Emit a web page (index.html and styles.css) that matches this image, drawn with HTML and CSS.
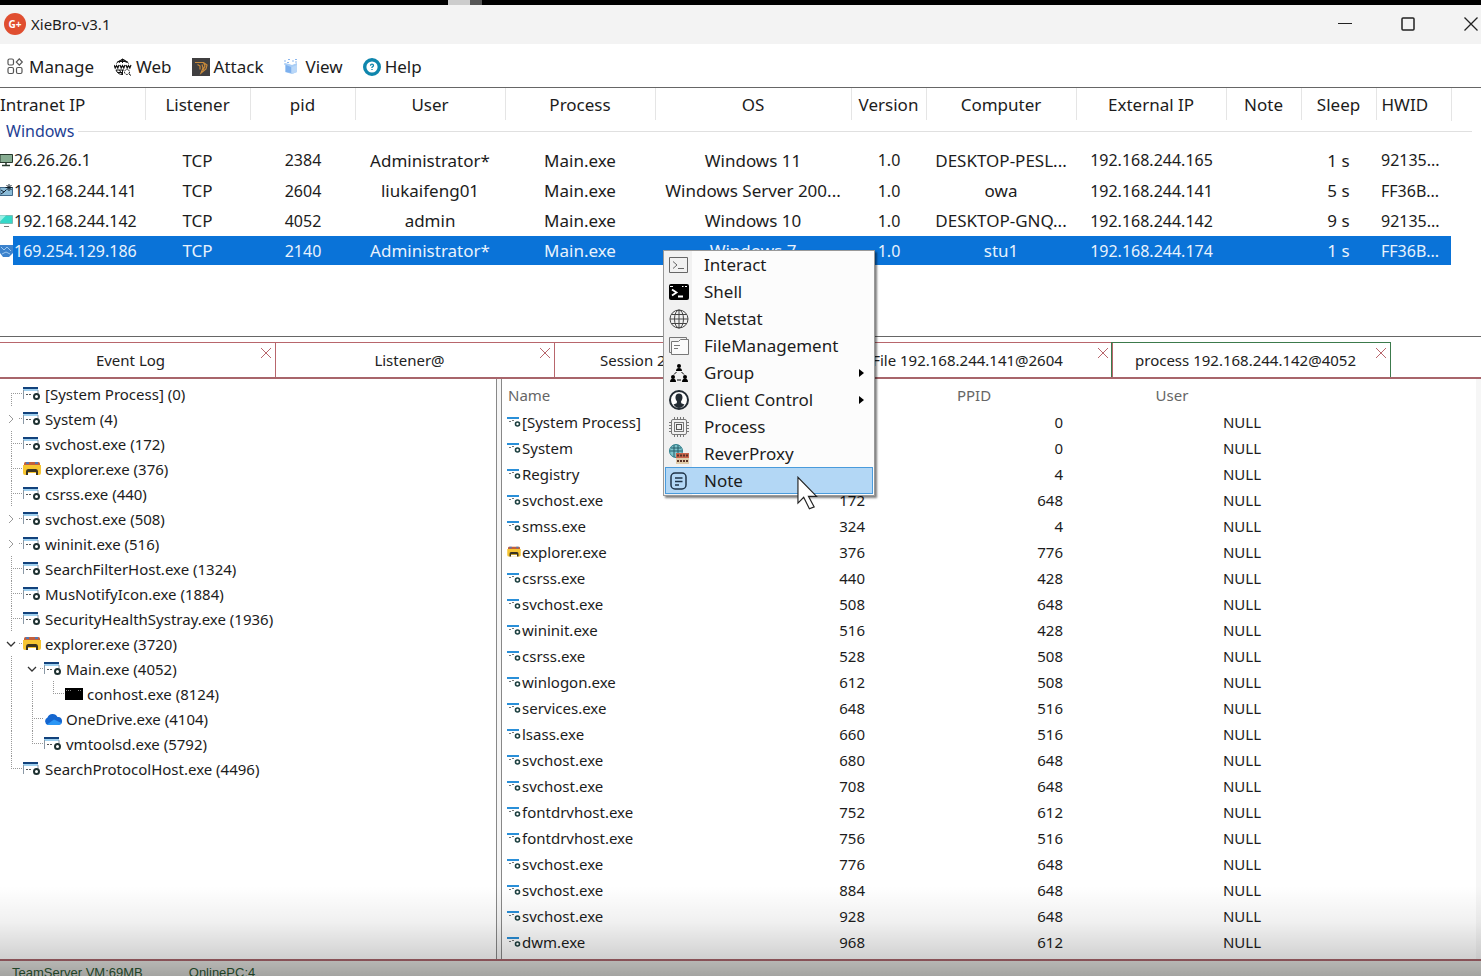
FILE: index.html
```
<!DOCTYPE html>
<html lang="en">

<head>
    <meta charset="UTF-8">
    <meta name="viewport" content="width=device-width, initial-scale=1.0">
    <title>XieBro-v3.1</title>
    <link rel="stylesheet" href="styles.css">
</head>
<body>
    <!-- shared icons -->
    <svg class="defs" aria-hidden="true">
        <symbol id="i-exe" viewBox="0 0 18 16">
            <path d="M0 2h16v12H0z" fill="#fff"/>
            <path d="M0 1h15v4H0z" fill="#9fd0ee"/>
            <path d="M0 1h15v2H0z" fill="#12427c"/>
            <path d="M.5 4v9M15 4v4" stroke="#8a98a5" fill="none"/>
            <path d="M3 8.500h2M6 8.500h2" stroke="#555" fill="none"/>
            <circle cx="13.500" cy="10.500" r="2.500" fill="#fff" stroke="#1d3030" stroke-width="2"/>
        </symbol>
        <symbol id="i-exe-small" viewBox="0 0 14 12">
            <path d="M0 1h12v2H0z" fill="#2a8fd8"/>
            <path d="M2 5.500h2M5 4.500h2" stroke="#777" fill="none"/>
            <circle cx="10.500" cy="8" r="2" fill="#fff" stroke="#1d4040" stroke-width="1.600"/>
        </symbol>
        <symbol id="i-folder" viewBox="0 0 18 16">
            <path d="M1 2.500q0-1.500 1.500-1.500h13q1.500 0 1.500 1.500V5H1z" fill="#c4603a"/>
            <path d="M3 1h3v2H3zM12 1h3v2h-3z" fill="#5577b0"/>
            <path d="M0 4h18v8q0 2-2 2H2q-2 0-2-2z" fill="#f6c531"/>
            <path d="M3 14V10.500Q3 8 5 8h8q2 0 2 2.500V14h-2v-3H5v3z" fill="#3a3320"/>
            <path d="M5 12h8v2H5z" fill="#fff"/>
        </symbol>
        <symbol id="i-console" viewBox="0 0 18 16">
            <path d="M0 2h18v12H0z" fill="#000"/>
            <path d="M1 4.500h5M13 4.500h4" stroke="#888" stroke-dasharray="1 1" fill="none"/>
        </symbol>
        <symbol id="i-cloud" viewBox="0 0 18 16">
            <path d="M4 14a4 4 0 0 1-.5-7.500A5.500 5.500 0 0 1 13.500 6 4 4 0 0 1 14.500 14z" fill="#1566cf"/>
            <path d="M3 13.500 10 8.500l7.500 3.500q-.5 2-3 2H4z" fill="#2a96f5"/>
        </symbol>
        <symbol id="i-pc" viewBox="0 0 13 14">
            <path d="M0 1.500h12.500v8H0z" fill="#87ad92" stroke="#26382c"/>
            <path d="M6 10v2M2 12.500h8" stroke="#26382c" stroke-width="1.500"/>
        </symbol>
        <symbol id="i-pc-server" viewBox="0 0 13 14">
            <path d="M0 3.500h12.500v8H0z" fill="#8cbcd8" stroke="#41698a"/>
            <path d="M1 6l3 2 2-2M1 10l3-2" stroke="#123" fill="none"/>
            <path d="M9 0v7M5.500 3.500h7M6.500 1l5 5M11.500 1l-5 5" stroke="#0c1c28"/>
        </symbol>
        <symbol id="i-pc-cyan" viewBox="0 0 13 14">
            <path d="M0 1.500h12.500v8H0z" fill="#35d8c8" stroke="#7abab4"/>
            <path d="M0 1.500h6l-6 6z" fill="#9af0e6"/>
            <path d="M4 12.500h5" stroke="#777"/>
        </symbol>
        <symbol id="i-pc-selected" viewBox="0 0 13 14">
            <path d="M0 1h13v8l-4 4H3L0 9z" fill="#3c82cc"/>
            <path d="M1 3l3 3 3-3 4 4M2 10l4-2 4 2" stroke="#9cc8f0" fill="none"/>
        </symbol>
        <symbol id="i-close" viewBox="0 0 12 12">
            <path d="M1 1l10 10M11 1L1 11" stroke="currentColor" fill="none"/>
        </symbol>
        <symbol id="i-chevron-right" viewBox="0 0 8 10">
            <path d="M2 1l4 4-4 4" stroke="#999" fill="none"/>
        </symbol>
        <symbol id="i-chevron-down" viewBox="0 0 10 8">
            <path d="M1 2l4 4 4-4" stroke="#333" stroke-width="1.300" fill="none"/>
        </symbol>
    </svg>

    <div class="desktop"><span class="light"></span><span class="grip"></span></div>

    <header class="titlebar">
        <span class="logo">G+</span>
        <h1>XieBro-v3.1</h1>
        <div class="controls">
            <button type="button" aria-label="Minimize">
                <svg viewBox="0 0 16 16"><path d="M1 7.500h14" stroke="#222"/></svg>
            </button>
            <button type="button" aria-label="Maximize">
                <svg viewBox="0 0 16 16"><rect x="2" y="2" width="12" height="12" rx="1" fill="none" stroke="#222" stroke-width="1.500"/></svg>
            </button>
            <button type="button" aria-label="Close">
                <svg viewBox="0 0 16 16"><path d="M1.500 1.500l13 13M14.500 1.500l-13 13" stroke="#222" stroke-width="1.300"/></svg>
            </button>
        </div>
    </header>

    <nav class="menubar">
        <button type="button">
            <svg viewBox="0 0 18 18" fill="none" stroke="#555" stroke-width="1.200"><rect x="1" y="1" width="5.500" height="6" rx="1.500"/><rect x="1" y="9.500" width="5.500" height="6" rx="1.500"/><rect x="9.500" y="9.500" width="5.500" height="6" rx="1.500"/><path d="M12.300 .8l3 3.200-3 3.200-3-3.200z"/></svg>
            Manage
        </button>
        <button type="button">
            <svg viewBox="0 0 18 18" fill="none" stroke="#111"><path d="M2.500 5.500a7 7 0 0 1 12 0M2 12a7 7 0 0 0 7 4.500M8.500 1v4M5 5q1-3 3.500-4 3 1 4 4M5.500 12q1 3 3.500 4.500M8.500 12v4M3.500 3.500h10M2 12h8M3.500 14.500h5"/><path d="M0 7l1.200 3L2.500 7.500 3.800 10 5 7M6 7l1.200 3 1.300-2.500L9.800 10 11 7M12 7l1.200 3 1.300-2.500 1.300 2.500L17 7" stroke-width="1.200"/><circle cx="13" cy="14" r="2.500" stroke-dasharray="2 1"/><path d="M15 16l2 1.500"/></svg>
            Web
        </button>
        <button type="button">
            <svg viewBox="0 0 18 18"><path d="M0 0h18v18H0z" fill="#403f40"/><path d="M3 4.500h8.500L15 7l-1 4-5 4 2-5-1-3.500M5.500 6.500L8 8v3.500M11.500 4.500L13 8l-2 4" fill="none" stroke="#c98a3a" stroke-width="1.200"/></svg>
            Attack
        </button>
        <button type="button">
            <svg viewBox="0 0 18 18"><path d="M2 5l4 1 3 1 5-2v9l-5 2-7-2z" fill="#a9cdf5"/><path d="M3 7l5 2v6l-5-1z" fill="#7db0ee"/><path d="M9 9l5-2v7l-5 2z" fill="#b9d7f8"/><path d="M1 3h2M5 1.500h2M9 3h2M12 1.500h2M4 4.500h2M12 4h2M1 6h1" stroke="#8ab6ee"/></svg>
            View
        </button>
        <button type="button">
            <svg viewBox="0 0 18 18"><circle cx="9" cy="9" r="7.300" fill="#fff" stroke="#0f86ad" stroke-width="3.400"/><path d="M7.500 7.800q0-1.600 1.500-1.600t1.500 1.300q0 .8-1.500 1.700v.8M9 11v1" fill="none" stroke="#0f86ad" stroke-width="1.300"/></svg>
            Help
        </button>
    </nav>

    <section class="sessions">
        <table>
            <colgroup>
                <col class="w-icon"><col class="w-ip"><col class="w-105"><col class="w-105"><col class="w-150"><col class="w-150"><col class="w-os"><col class="w-75"><col class="w-150"><col class="w-150"><col class="w-75"><col class="w-75"><col class="w-75"><col>
            </colgroup>
            <thead>
                <tr>
                    <th colspan="2" class="left">Intranet IP</th>
                    <th>Listener</th>
                    <th>pid</th>
                    <th>User</th>
                    <th>Process</th>
                    <th>OS</th>
                    <th>Version</th>
                    <th>Computer</th>
                    <th>External IP</th>
                    <th>Note</th>
                    <th>Sleep</th>
                    <th class="left hwid">HWID</th>
                    <td></td>
                </tr>
            </thead>
            <tbody>
                <tr class="group">
                    <th colspan="14"><div>Windows</div></th>
                </tr>
                <tr>
                    <td><svg class="pc"><use href="#i-pc"/></svg></td>
                    <td class="left ip">26.26.26.1</td>
                    <td>TCP</td><td class="ip">2384</td><td>Administrator*</td><td>Main.exe</td><td>Windows 11</td><td class="ip">1.0</td><td>DESKTOP-PESL...</td><td class="ip">192.168.244.165</td><td></td><td>1 s</td><td class="left hwid ip">92135...</td><td></td>
                </tr>
                <tr>
                    <td><svg class="pc"><use href="#i-pc-server"/></svg></td>
                    <td class="left ip">192.168.244.141</td>
                    <td>TCP</td><td class="ip">2604</td><td>liukaifeng01</td><td>Main.exe</td><td>Windows Server 200...</td><td class="ip">1.0</td><td>owa</td><td class="ip">192.168.244.141</td><td></td><td>5 s</td><td class="left hwid ip">FF36B...</td><td></td>
                </tr>
                <tr>
                    <td><svg class="pc"><use href="#i-pc-cyan"/></svg></td>
                    <td class="left ip">192.168.244.142</td>
                    <td>TCP</td><td class="ip">4052</td><td>admin</td><td>Main.exe</td><td>Windows 10</td><td class="ip">1.0</td><td>DESKTOP-GNQ...</td><td class="ip">192.168.244.142</td><td></td><td>9 s</td><td class="left hwid ip">92135...</td><td></td>
                </tr>
                <tr class="selected">
                    <td><svg class="pc"><use href="#i-pc-selected"/></svg></td>
                    <td class="left ip">169.254.129.186</td>
                    <td>TCP</td><td class="ip">2140</td><td>Administrator*</td><td>Main.exe</td><td>Windows 7</td><td class="ip">1.0</td><td>stu1</td><td class="ip">192.168.244.174</td><td></td><td>1 s</td><td class="left hwid ip">FF36B...</td><td></td>
                </tr>
            </tbody>
        </table>
    </section>

    <div class="tabs">
        <div class="tab"><a href="#event">Event Log</a><button type="button" aria-label="Close Event Log"><svg><use href="#i-close"/></svg></button></div>
        <div class="tab"><a href="#listener">Listener@</a><button type="button" aria-label="Close Listener"><svg><use href="#i-close"/></svg></button></div>
        <div class="tab"><a href="#session">Session 26.26.26.1@2384</a><button type="button" aria-label="Close Session"><svg><use href="#i-close"/></svg></button></div>
        <div class="tab"><a href="#file">File 192.168.244.141@2604</a><button type="button" aria-label="Close File"><svg><use href="#i-close"/></svg></button></div>
        <div class="tab active"><a href="#process">process 192.168.244.142@4052</a><button type="button" aria-label="Close process"><svg><use href="#i-close"/></svg></button></div>
    </div>

    <main class="panes">
        <ul class="tree" id="tree"></ul>
        <div class="processes">
            <table>
                <colgroup>
                    <col class="w-name"><col class="w-198"><col class="w-198"><col class="w-198"><col>
                </colgroup>
                <thead>
                    <tr><th class="left">Name</th><th>PID</th><th>PPID</th><th>User</th><th></th></tr>
                </thead>
                <tbody id="rows"></tbody>
            </table>
        </div>
    </main>

    <footer class="status">
        <span>TeamServer VM:69MB</span>
        <span>OnlinePC:4</span>
    </footer>

    <div class="popup" role="menu">
        <button type="button" role="menuitem">
            <svg viewBox="0 0 20 20" fill="none" stroke="#666"><path d="M.5 2.500h18v15H.5z"/><path d="M4 6.500l4 3.500-4 3.500M9 13.500h6"/></svg>
            <span>Interact</span>
        </button>
        <button type="button" role="menuitem">
            <svg viewBox="0 0 20 20"><rect y="2" width="20" height="16" rx="2" fill="#000"/><path d="M1 4.500h3M13 4.500h1.500M16 4.500h2" stroke="#fff"/><path d="M3 7.500l4.500 3-4.500 3M9 14.500h5" fill="none" stroke="#fff" stroke-width="1.800"/></svg>
            <span>Shell</span>
        </button>
        <button type="button" role="menuitem">
            <svg viewBox="0 0 20 20" fill="none" stroke="#444"><circle cx="10" cy="10" r="9"/><ellipse cx="10" cy="10" rx="4.500" ry="9"/><path d="M10 1v18M1 10h18M2.500 5.500h15M2.500 14.500h15"/></svg>
            <span>Netstat</span>
        </button>
        <button type="button" role="menuitem">
            <svg viewBox="0 0 20 20" fill="none" stroke="#777"><path d="M2.500 16.500h-2v-15h17v3"/><path d="M2.500 18.500v-13h7l2-2h8v15z" fill="#fafafa"/><path d="M5 9.500h6M5 12.500h4"/></svg>
            <span>FileManagement</span>
        </button>
        <button type="button" role="menuitem">
            <svg viewBox="0 0 20 20" fill="#000"><circle cx="10" cy="3" r="2"/><path d="M7 8q0-3 3-3t3 3z"/><circle cx="4" cy="14" r="2"/><path d="M1 19q0-3.500 3-3.500t3 3.500z"/><circle cx="16" cy="14" r="2"/><path d="M13 19q0-3.500 3-3.500t3 3.500z"/><path d="M7.500 9L5 11.500M12.500 9l2.500 2.500M8 17h4" stroke="#000"/></svg>
            <span>Group</span><i class="more"></i>
        </button>
        <button type="button" role="menuitem">
            <svg viewBox="0 0 20 20"><circle cx="10" cy="10" r="9" fill="#fff" stroke="#222b33" stroke-width="2"/><path d="M10 3.500c4 0 4.500 5 2 8l.3 1.800 3.200 1.200Q13 18 10 18t-5.500-3.500l3.200-1.200.3-1.800c-2.500-3-2-8 2-8z" fill="#222b33"/></svg>
            <span>Client Control</span><i class="more"></i>
        </button>
        <button type="button" role="menuitem">
            <svg viewBox="0 0 20 20" fill="none" stroke="#777"><rect x="2.500" y="2.500" width="15" height="15" rx="1.500"/><rect x="5.500" y="5.500" width="9" height="9"/><rect x="7.500" y="7.500" width="5" height="5" stroke="#555"/><path d="M5.500 0v2M8.500 0v2M11.500 0v2M14.500 0v2M5.500 18v2M8.500 18v2M11.500 18v2M14.500 18v2M0 5.500h2M0 8.500h2M0 11.500h2M0 14.500h2M18 5.500h2M18 8.500h2M18 11.500h2M18 14.500h2"/></svg>
            <span>Process</span>
        </button>
        <button type="button" role="menuitem">
            <svg viewBox="0 0 20 20"><circle cx="7" cy="7" r="6.500" fill="#7fc4cc" stroke="#2f7f8c"/><path d="M5 1v12M9 1v12M1 7h12M2 4h10" stroke="#255d68" fill="none"/><path d="M7 9h13v5H7z" fill="#c9654c"/><path d="M7 14h13v6H7z" fill="#e0cba8"/><path d="M8 11.500h12M8 17h12" stroke="#5a3226" stroke-width="2" stroke-dasharray="2 1" fill="none"/></svg>
            <span>ReverProxy</span>
        </button>
        <button type="button" role="menuitem" class="current">
            <svg viewBox="0 0 20 20" fill="none" stroke="#1f3347" stroke-width="1.500"><rect x="2" y="2" width="15" height="16" rx="4"/><path d="M6 7h7.500M6 10.500h7.500M6 14h4"/></svg>
            <span>Note</span>
        </button>
    </div>

    <svg class="pointer" viewBox="0 0 22 36" aria-hidden="true"><path d="M1 1v27l6-6 6 12 5-2-6-11h8.500z" fill="#fff" stroke="#222" stroke-width="1.200"/></svg>
    <div class="shade"></div>

    <script>
        // each tree row: guide cells from left to right, icon, label
        const tree = [
            ["first", "exe", "[System Process] (0)"],
            ["closed", "exe", "System (4)"],
            ["mid", "exe", "svchost.exe (172)"],
            ["mid", "folder", "explorer.exe (376)"],
            ["mid", "exe", "csrss.exe (440)"],
            ["closed", "exe", "svchost.exe (508)"],
            ["closed", "exe", "wininit.exe (516)"],
            ["mid", "exe", "SearchFilterHost.exe (1324)"],
            ["mid", "exe", "MusNotifyIcon.exe (1884)"],
            ["mid", "exe", "SecurityHealthSystray.exe (1936)"],
            ["open", "folder", "explorer.exe (3720)"],
            ["line open", "exe", "Main.exe (4052)"],
            ["line line last", "console", "conhost.exe (8124)"],
            ["line mid", "cloud", "OneDrive.exe (4104)"],
            ["line last", "exe", "vmtoolsd.exe (5792)"],
            ["last", "exe", "SearchProtocolHost.exe (4496)"]
        ];

        const processes = [
            ["[System Process]", 0, 0], ["System", 4, 0], ["Registry", 92, 4],
            ["svchost.exe", 172, 648], ["smss.exe", 324, 4], ["explorer.exe", 376, 776],
            ["csrss.exe", 440, 428], ["svchost.exe", 508, 648], ["wininit.exe", 516, 428],
            ["csrss.exe", 528, 508], ["winlogon.exe", 612, 508], ["services.exe", 648, 516],
            ["lsass.exe", 660, 516], ["svchost.exe", 680, 648], ["svchost.exe", 708, 648],
            ["fontdrvhost.exe", 752, 612], ["fontdrvhost.exe", 756, 516], ["svchost.exe", 776, 648],
            ["svchost.exe", 884, 648], ["svchost.exe", 928, 648], ["dwm.exe", 968, 612]
        ];

        function guide(kind) {
            if (kind === "closed") {
                return `<button type="button" class="guide closed" aria-label="Expand"><svg><use href="#i-chevron-right"/></svg></button>`;
            }
            if (kind === "open") {
                return `<button type="button" class="guide open" aria-label="Collapse"><svg><use href="#i-chevron-down"/></svg></button>`;
            }
            return `<span class="guide ${kind}"></span>`;
        }

        document.getElementById("tree").innerHTML = tree.map(([guides, icon, label]) =>
            `<li>${guides.split(" ").map(guide).join("")}<svg class="file"><use href="#i-${icon}"/></svg><span>${label}</span></li>`
        ).join("");

        document.getElementById("rows").innerHTML = processes.map(([name, pid, ppid]) => {
            let icon = name === "explorer.exe" ? "folder" : "exe-small";
            return `<tr><td class="left"><div><svg><use href="#i-${icon}"/></svg>${name}</div></td><td>${pid}</td><td>${ppid}</td><td>NULL</td><td></td></tr>`;
        }).join("");
    </script>
</body>
</html>
```
FILE: styles.css
```
* {
    box-sizing: border-box;
}

html {
    height: 100%;
    overflow: hidden;
}

body {
    margin: 0;
    height: 100%;
    overflow: hidden;
    position: relative;
    background-color: #fff;
    color: #1c1c1c;
    font-family: "Noto Sans", "Open Sans", sans-serif;
    font-size: 15px;
}

button {
    padding: 0;
    border: none;
    background: none;
    color: inherit;
    font: inherit;
}

svg {
    display: block;
    flex: none;
}

table {
    width: 100%;
    table-layout: fixed;
    border-collapse: collapse;
}

th,
td {
    padding: 0;
    font-weight: normal;
    white-space: nowrap;
}

.defs {
    display: none;
}

/* strip above the window */
.desktop {
    display: flex;
    height: 5px;
    padding-left: 448px;
    background-color: #000;
}

.light {
    width: 22px;
    background-color: #ccc;
}

.grip {
    width: 12px;
    background-color: #555;
}

.titlebar {
    display: flex;
    align-items: center;
    gap: 5px;
    height: 39px;
    padding: 0 2px 2px 4px;
    background-color: #f3f3f3;
}

.logo {
    width: 22px;
    height: 22px;
    border-radius: 50%;
    background-color: #e04e30;
    color: #fff;
    font-size: 10px;
    font-weight: bold;
    line-height: 22px;
    text-align: center;
}

h1 {
    margin: 0;
    font-size: 15px;
    font-weight: normal;
}

.controls {
    display: flex;
    gap: 47px;
    margin-left: auto;
}

.controls svg {
    width: 16px;
    height: 16px;
}

.menubar {
    display: flex;
    align-items: center;
    gap: 20px;
    height: 44px;
    padding: 2px 7px 0;
    border-bottom: 1px solid #666;
    font-size: 17px;
}

.menubar button {
    display: flex;
    align-items: center;
    gap: 4px;
}

.menubar svg {
    width: 18px;
    height: 18px;
}

/* session list */
.sessions {
    padding-bottom: 70px;
    border-bottom: 1px solid #666;
    font-size: 17px;
    text-align: center;
}

.w-icon { width: 13px; }
.w-ip { width: 132px; }
.w-75 { width: 75px; }
.w-105 { width: 105px; }
.w-150 { width: 150px; }
.w-os { width: 196px; }
.w-name { width: 175px; }
.w-198 { width: 198px; }

.left {
    text-align: left;
}

.sessions thead th {
    height: 32px;
    border-right: 1px solid #e5e5e5;
}

.sessions td {
    height: 30px;
    border-bottom: 1px solid #fff;
}

.sessions .ip {
    padding-left: 1px;
    font-size: 16px;
}

.sessions .hwid {
    padding-left: 5px;
}

.group div {
    display: flex;
    align-items: center;
    gap: 4px;
    height: 25px;
    padding: 0 9px 4px 6px;
    color: #1f3f94;
    font-size: 16px;
}

.group div::after {
    content: "";
    flex: 1;
    height: 1px;
    background-color: #e0e0e0;
}

.pc {
    width: 13px;
    height: 14px;
}

.selected td {
    background-color: #0a73d8;
    color: #e8f2fd;
}

.selected td:first-child,
.selected td:last-child {
    background-color: #fff;
}

.tabs {
    display: flex;
    margin: 5px 0 0 -3px;
    border-bottom: 2px solid #a8656b;
}

.tab {
    display: flex;
    align-items: flex-start;
    width: 279px;
    height: 35px;
    padding: 4px 3px 0 4px;
    border-top: 1px solid #b8666c;
    border-right: 1px solid #b8666c;
}

.tab a {
    flex: 1;
    padding-top: 3px;
    color: #222;
    text-align: center;
    text-decoration: none;
    white-space: nowrap;
}

.tab button {
    color: #b8666c;
}

.tab svg {
    width: 12px;
    height: 12px;
}

.tab.active {
    width: 280px;
    margin-left: -2px;
    border: 1px solid #3c7a4c;
    border-bottom: none;
}

.panes {
    display: flex;
    gap: 4px;
    padding-right: 5px;
    background-color: #f6f6f6;
    border-bottom: 2px solid #a8656b;
}

/* process tree */
.tree {
    width: 497px;
    margin: 0;
    padding: 2px 0 0 2px;
    border-right: 1px solid #888;
    background-color: #fff;
    list-style: none;
}

.tree li {
    display: flex;
    align-items: center;
    height: 25px;
    white-space: nowrap;
}

.guide {
    --down: repeating-linear-gradient(to bottom, #999 0 1px, transparent 1px 2px);
    --across: repeating-linear-gradient(to right, #999 0 1px, transparent 1px 2px);
    flex: none;
    width: 21px;
    height: 25px;
    background-repeat: no-repeat;
}

.line {
    background-image: var(--down);
    background-size: 1px 25px;
    background-position: 9px 0;
}

.mid,
.last,
.first {
    background-image: var(--down), var(--across);
    background-size: 1px 25px, 12px 1px;
    background-position: 9px 0, 9px 12px;
}

.last {
    background-size: 1px 12px, 12px 1px;
}

.first {
    background-size: 1px 13px, 12px 1px;
    background-position: 9px 12px, 9px 12px;
}

.closed,
.open {
    display: flex;
    align-items: center;
    background-image: var(--across);
    background-size: 4px 1px;
    background-position: 17px 12px;
}

.closed svg {
    width: 8px;
    height: 10px;
    margin-left: 5px;
}

.open svg {
    width: 10px;
    height: 8px;
    margin-left: 4px;
}

.file {
    width: 18px;
    height: 16px;
    margin-right: 4px;
}

/* process table */
.processes {
    flex: 1;
    padding-bottom: 4px;
    border-left: 1px solid #888;
    background-color: #fff;
}

.processes th {
    height: 30px;
    padding-top: 2px;
    color: #666;
}

.processes th.left {
    padding-left: 6px;
}

.processes td {
    height: 26px;
    padding-right: 10px;
    line-height: 20px;
    text-align: right;
}

.processes td div {
    display: flex;
    align-items: center;
    gap: 1px;
    padding-left: 5px;
}

.processes td svg {
    width: 14px;
    height: 12px;
}

.status {
    display: flex;
    gap: 46px;
    height: 24px;
    padding: 4px 12px;
    background-color: #e3e3df;
    color: #2c5a34;
    font-family: "Liberation Sans", Arial, sans-serif;
    font-size: 13px;
}

/* context menu over the selected session */
.popup {
    position: absolute;
    top: 250px;
    left: 663px;
    width: 212px;
    padding: 0 1px 1px;
    border: 1px solid #999;
    background: linear-gradient(to right, #f1f1f1 28px, #fcfcfc 28px);
    box-shadow: 2px 2px 2px rgba(0, 0, 0, 0.5);
    font-size: 17px;
}

.popup button {
    display: flex;
    align-items: center;
    gap: 15px;
    width: 100%;
    height: 27px;
    padding: 0 8px 0 3px;
    border: 1px solid transparent;
    line-height: 22px;
}

.popup svg {
    width: 20px;
    height: 20px;
}

.popup .current {
    border-color: #4a9bdc;
    background-color: #b3d7f5;
}

.more {
    margin-left: auto;
    border: 4px solid transparent;
    border-right: none;
    border-left: 5px solid #000;
}

.pointer {
    position: absolute;
    top: 476px;
    left: 797px;
    width: 21px;
    height: 35px;
}

/* darkening along the lower edge */
.shade {
    position: absolute;
    right: 0;
    bottom: 0;
    left: 0;
    height: 90px;
    background: linear-gradient(to bottom, transparent, rgba(0, 0, 0, 0.06) 40%, rgba(0, 0, 0, 0.18) 80%, rgba(0, 0, 0, 0.28));
    pointer-events: none;
}
```
